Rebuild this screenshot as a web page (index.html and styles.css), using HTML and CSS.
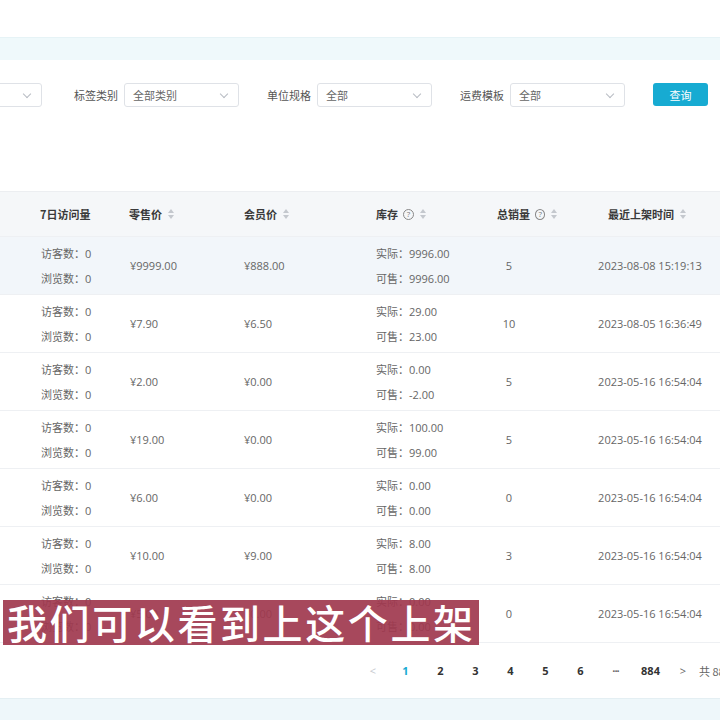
FILE: index.html
```html
<!DOCTYPE html>
<html lang="zh">
<head>
<meta charset="utf-8">
<link rel="stylesheet" href="styles.css">
</head>
<body>
<div class="page">
  <div class="top"></div>
  <div class="band"></div>
  <section class="filters">
    <div class="select s-first"><span></span><i class="chev"></i></div>
    <label class="lbl">标签类别</label>
    <div class="select"><span>全部类别</span><i class="chev"></i></div>
    <label class="lbl">单位规格</label>
    <div class="select"><span>全部</span><i class="chev"></i></div>
    <label class="lbl">运费模板</label>
    <div class="select"><span>全部</span><i class="chev"></i></div>
    <button class="btn">查询</button>
  </section>

  <section class="table">
    <div class="row head">
      <div class="c c1"><b>7日访问量</b></div>
      <div class="c c2"><b>零售价</b><i class="sort"></i></div>
      <div class="c c3"><b>会员价</b><i class="sort"></i></div>
      <div class="c c4"><b>库存</b><i class="help">?</i><i class="sort"></i></div>
      <div class="c c5"><b>总销量</b><i class="help">?</i><i class="sort"></i></div>
      <div class="c c6"><b>最近上架时间</b><i class="sort"></i></div>
    </div>

    <div class="row hover">
      <div class="c c1"><p>访客数：0</p><p>浏览数：0</p></div>
      <div class="c c2">¥9999.00</div>
      <div class="c c3">¥888.00</div>
      <div class="c c4"><p>实际：9996.00</p><p>可售：9996.00</p></div>
      <div class="c c5">5</div>
      <div class="c c6">2023-08-08 15:19:13</div>
    </div>
    <div class="row">
      <div class="c c1"><p>访客数：0</p><p>浏览数：0</p></div>
      <div class="c c2">¥7.90</div>
      <div class="c c3">¥6.50</div>
      <div class="c c4"><p>实际：29.00</p><p>可售：23.00</p></div>
      <div class="c c5">10</div>
      <div class="c c6">2023-08-05 16:36:49</div>
    </div>
    <div class="row">
      <div class="c c1"><p>访客数：0</p><p>浏览数：0</p></div>
      <div class="c c2">¥2.00</div>
      <div class="c c3">¥0.00</div>
      <div class="c c4"><p>实际：0.00</p><p>可售：-2.00</p></div>
      <div class="c c5">5</div>
      <div class="c c6">2023-05-16 16:54:04</div>
    </div>
    <div class="row">
      <div class="c c1"><p>访客数：0</p><p>浏览数：0</p></div>
      <div class="c c2">¥19.00</div>
      <div class="c c3">¥0.00</div>
      <div class="c c4"><p>实际：100.00</p><p>可售：99.00</p></div>
      <div class="c c5">5</div>
      <div class="c c6">2023-05-16 16:54:04</div>
    </div>
    <div class="row">
      <div class="c c1"><p>访客数：0</p><p>浏览数：0</p></div>
      <div class="c c2">¥6.00</div>
      <div class="c c3">¥0.00</div>
      <div class="c c4"><p>实际：0.00</p><p>可售：0.00</p></div>
      <div class="c c5">0</div>
      <div class="c c6">2023-05-16 16:54:04</div>
    </div>
    <div class="row">
      <div class="c c1"><p>访客数：0</p><p>浏览数：0</p></div>
      <div class="c c2">¥10.00</div>
      <div class="c c3">¥9.00</div>
      <div class="c c4"><p>实际：8.00</p><p>可售：8.00</p></div>
      <div class="c c5">3</div>
      <div class="c c6">2023-05-16 16:54:04</div>
    </div>
    <div class="row">
      <div class="c c1"><p>访客数：0</p><p>浏览数：0</p></div>
      <div class="c c2">¥5.00</div>
      <div class="c c3">¥0.00</div>
      <div class="c c4"><p>实际：0.00</p><p>可售：0.00</p></div>
      <div class="c c5">0</div>
      <div class="c c6">2023-05-16 16:54:04</div>
    </div>
  </section>

  <nav class="pager">
    <span class="pg arrow prev">&lt;</span>
    <span class="pg num active">1</span>
    <span class="pg num">2</span>
    <span class="pg num">3</span>
    <span class="pg num">4</span>
    <span class="pg num">5</span>
    <span class="pg num">6</span>
    <span class="pg num more">···</span>
    <span class="pg num">884</span>
    <span class="pg arrow next">&gt;</span>
    <span class="total">共 8836 条</span>
  </nav>
  <div class="band bottom"></div>

  <div class="subtitle">我们可以看到上这个上架</div>
</div>
</body>
</html>
```

FILE: styles.css
```css
* { box-sizing: border-box; }
html, body {
  margin: 0;
  padding: 0;
  width: 720px;
  height: 720px;
  overflow: hidden;
  background: #ffffff;
}
body {
  font-family: "Open Sans", "Noto Sans CJK SC", sans-serif;
  font-size: 11px;
  color: #666;
}
.page {
  position: relative;
  width: 720px;
  height: 720px;
  overflow: hidden;
}
.top { height: 37px; background: #fff; }
.band {
  height: 23px;
  background: #eff9fb;
  border-top: 1px solid #e6f3f6;
}
.band.bottom {
  height: 22px;
  background: #eef7fa;
  border-top: 1px solid #e4eff3;
}

/* filters */
.filters {
  height: 131px;
  padding-top: 23px;
  display: flex;
  align-items: flex-start;
  white-space: nowrap;
}
.filters > * { flex-shrink: 0; }
.select {
  position: relative;
  width: 115px;
  height: 24px;
  border: 1px solid #dfe2e7;
  border-radius: 3px;
  background: #fff;
  display: flex;
  align-items: center;
  padding-left: 8px;
  color: #666;
  font-family: "Noto Sans CJK SC", sans-serif;
}
.select.s-first { margin-left: -73px; }
.chev {
  position: absolute;
  right: 11px;
  top: 7px;
  width: 6px;
  height: 6px;
  border-right: 1px solid #b8bcc3;
  border-bottom: 1px solid #b8bcc3;
  transform: rotate(45deg);
}
.lbl {
  height: 24px;
  line-height: 24px;
  color: #555;
  font-family: "Noto Sans CJK SC", sans-serif;
  margin-left: 28px;
  margin-right: 6px;
}
.s-first + .lbl { margin-left: 32px; }
.btn {
  margin-left: 28px;
  width: 55px;
  height: 23px;
  border: none;
  border-radius: 3px;
  background: #17abd2;
  color: #fff;
  font-family: "Noto Sans CJK SC", sans-serif;
  font-size: 11px;
  padding: 0;
}

/* table */
.table { border-top: 1px solid #eceef1; }
.row {
  display: grid;
  grid-template-columns: 129px 115px 132px 84px 98px 184px;
  height: 58px;
  border-bottom: 1px solid #eef0f3;
  align-items: center;
}
.row.head {
  height: 45px;
  background: #f5f7f9;
  border-bottom: 1px solid #eef0f3;
  color: #333;
}
.row.hover { background: #f2f6fa; }
.c { white-space: nowrap; }
.c p { margin: 0; line-height: 25px; }
.c1 { padding-left: 41px; }
.c2 { padding-left: 1px; }
.c3 { padding-left: 0; }
.c4 { padding-left: 0; }
.c5 { text-align: center; }
.c6 { text-align: center; }
.head .c { display: flex; align-items: center; text-align: left; }
.head .c1 { padding-left: 40px; }
.head .c2 { padding-left: 0; }
.head .c5 { padding-left: 37px; }
.head .c6 { padding-left: 50px; }
.head b {
  font-weight: 700;
  font-family: "Noto Sans CJK SC", sans-serif;
  color: #3a3a3a;
}
.sort {
  position: relative;
  display: inline-block;
  width: 7px;
  height: 10px;
  margin-left: 6px;
}
.sort::before, .sort::after {
  content: "";
  position: absolute;
  left: 0;
  border-left: 3.5px solid transparent;
  border-right: 3.5px solid transparent;
}
.sort::before { top: 0; border-bottom: 4px solid #c4c8ce; }
.sort::after { bottom: 0; border-top: 4px solid #c4c8ce; }
.help {
  display: inline-flex;
  align-items: center;
  justify-content: center;
  width: 11px;
  height: 11px;
  border: 1px solid #888;
  border-radius: 50%;
  font-style: normal;
  font-size: 8px;
  line-height: 1;
  color: #777;
  margin-left: 5px;
}

/* pager */
.pager {
  height: 55px;
  display: flex;
  align-items: center;
  padding-left: 358px;
  white-space: nowrap;
}
.pager > * { flex-shrink: 0; }
.pg {
  width: 35px;
  text-align: center;
  font-weight: 700;
  color: #333;
}
.pg.arrow { width: 30px; font-weight: 400; color: #999; }
.pg.prev { color: #c6c9ce; }
.pg.next { color: #666; }
.pg.active { color: #17abd2; }
.pg.more { color: #666; letter-spacing: -1px; }
.total {
  margin-left: 1px;
  color: #666;
  font-family: "Noto Sans CJK SC", sans-serif;
}

/* subtitle overlay */
.subtitle {
  position: absolute;
  left: 3px;
  top: 600px;
  height: 45px;
  padding: 0 3px 0 4px;
  background: rgba(160, 56, 78, 0.92);
  color: #fff;
  font-family: "Noto Sans CJK SC", sans-serif;
  font-size: 40px;
  font-weight: 500;
  letter-spacing: 2.6px;
  line-height: 45px;
  white-space: nowrap;
}
```
